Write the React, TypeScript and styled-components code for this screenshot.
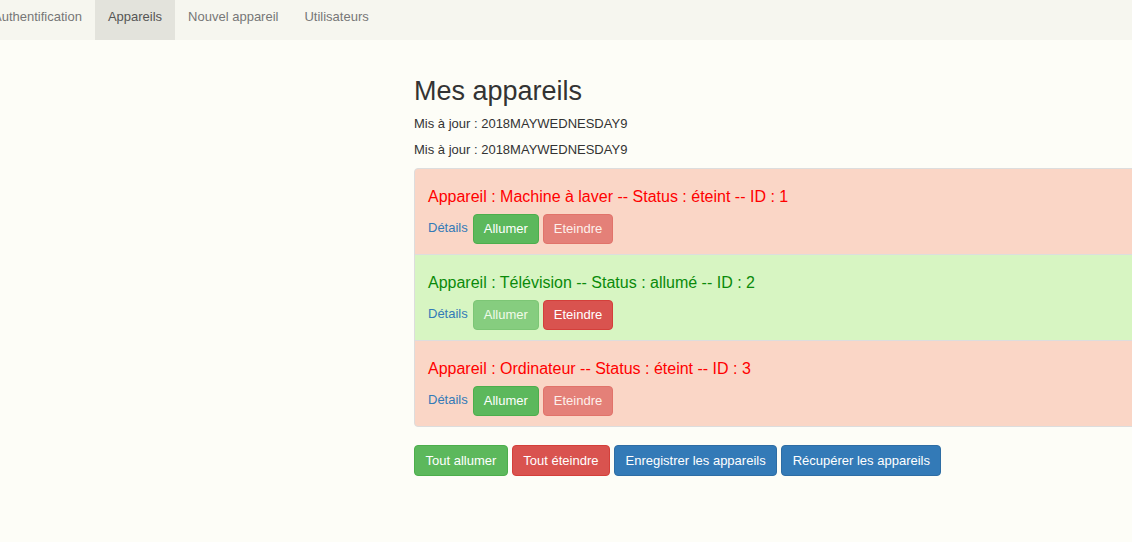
import React from "react";
import styled, { createGlobalStyle, css } from "styled-components";

const Global = createGlobalStyle`
  html, body { margin: 0; padding: 0; }
  body {
    background: #fdfdf7;
    font-family: "Liberation Sans", Arial, sans-serif;
    font-size: 13px;
    color: #333;
    overflow: hidden;
  }
`;

const Page = styled.div`
  width: 1132px;
  height: 542px;
  overflow: hidden;
`;

const NavBar = styled.nav`
  height: 40px;
  background: #f6f6ef;
  display: flex;
`;

const NavList = styled.ul`
  list-style: none;
  margin: 0 0 0 -20px;
  padding: 0;
  display: flex;
`;

const NavItem = styled.li<{ $active?: boolean }>`
  height: 40px;
  padding: 0 13px;
  line-height: 33px;
  font-size: 13px;
  color: #777;
  white-space: nowrap;
  ${(p) =>
    p.$active &&
    css`
      background: #e3e3dc;
      color: #555;
    `}
`;

const Main = styled.main`
  margin-left: 414px;
  padding-top: 34px;
  width: 740px;
`;

const Title = styled.h2`
  margin: 0 0 7px;
  font-size: 27px;
  font-weight: 400;
  line-height: 34px;
  color: #333;
`;

const Updated = styled.p`
  margin: 0 0 8px;
  line-height: 18px;
  font-size: 13px;
`;

const ListGroup = styled.ul`
  list-style: none;
  margin: 9px 0 19px;
  padding: 0;
`;

const Item = styled.li<{ $on: boolean }>`
  height: 87px;
  box-sizing: border-box;
  margin-bottom: -1px;
  padding: 10px 13px 9px;
  border: 1px solid #ddd;
  background: ${(p) => (p.$on ? "#d7f5c2" : "#fad6c6")};
  &:first-child { border-radius: 4px 0 0 0; }
  &:last-child { border-radius: 0 0 0 4px; }
`;

const ItemTitle = styled.h4<{ $on: boolean }>`
  margin: 9px 0;
  font-size: 16px;
  font-weight: 400;
  line-height: 17px;
  color: ${(p) => (p.$on ? "#0a8a0a" : "#f00")};
`;

const Actions = styled.div`
  display: flex;
  align-items: center;
  gap: 4px;
  margin-top: 1px;
`;

const DetailLink = styled.a`
  color: #337ab7;
  text-decoration: none;
  font-size: 13px;
  margin-right: 1px;
  position: relative;
  top: -2px;
`;

const variants = {
  success: { bg: "#5cb85c", border: "#4cae4c" },
  danger: { bg: "#d9534f", border: "#d43f3a" },
  primary: { bg: "#337ab7", border: "#2e6da4" },
};

const Button = styled.button<{ $variant: keyof typeof variants }>`
  height: 30px;
  padding: 0 10px;
  border: 1px solid ${(p) => variants[p.$variant].border};
  border-radius: 4px;
  background: ${(p) => variants[p.$variant].bg};
  color: #fff;
  font-family: "Liberation Sans", Arial, sans-serif;
  font-size: 13px;
  line-height: 28px;
  white-space: nowrap;
  &:disabled { opacity: 0.65; }
`;

const Footer = styled.div`
  display: flex;
  gap: 4px;
  ${Button} { height: 31px; padding: 0 10.5px; }
`;

const devices = [
  { id: 1, name: "Machine à laver", on: false },
  { id: 2, name: "Télévision", on: true },
  { id: 3, name: "Ordinateur", on: false },
];

export default function App() {
  return (
    <Page>
      <Global />
      <NavBar>
        <NavList>
          <NavItem>Authentification</NavItem>
          <NavItem $active>Appareils</NavItem>
          <NavItem>Nouvel appareil</NavItem>
          <NavItem>Utilisateurs</NavItem>
        </NavList>
      </NavBar>
      <Main>
        <Title>Mes appareils</Title>
        <Updated>Mis à jour : 2018MAYWEDNESDAY9</Updated>
        <Updated>Mis à jour : 2018MAYWEDNESDAY9</Updated>
        <ListGroup>
          {devices.map((d) => (
            <Item key={d.id} $on={d.on}>
              <ItemTitle $on={d.on}>
                Appareil : {d.name} -- Status : {d.on ? "allumé" : "éteint"} -- ID : {d.id}
              </ItemTitle>
              <Actions>
                <DetailLink href="#">Détails</DetailLink>
                <Button $variant="success" disabled={d.on}>Allumer</Button>
                <Button $variant="danger" disabled={!d.on}>Eteindre</Button>
              </Actions>
            </Item>
          ))}
        </ListGroup>
        <Footer>
          <Button $variant="success">Tout allumer</Button>
          <Button $variant="danger">Tout éteindre</Button>
          <Button $variant="primary">Enregistrer les appareils</Button>
          <Button $variant="primary">Récupérer les appareils</Button>
        </Footer>
      </Main>
    </Page>
  );
}
